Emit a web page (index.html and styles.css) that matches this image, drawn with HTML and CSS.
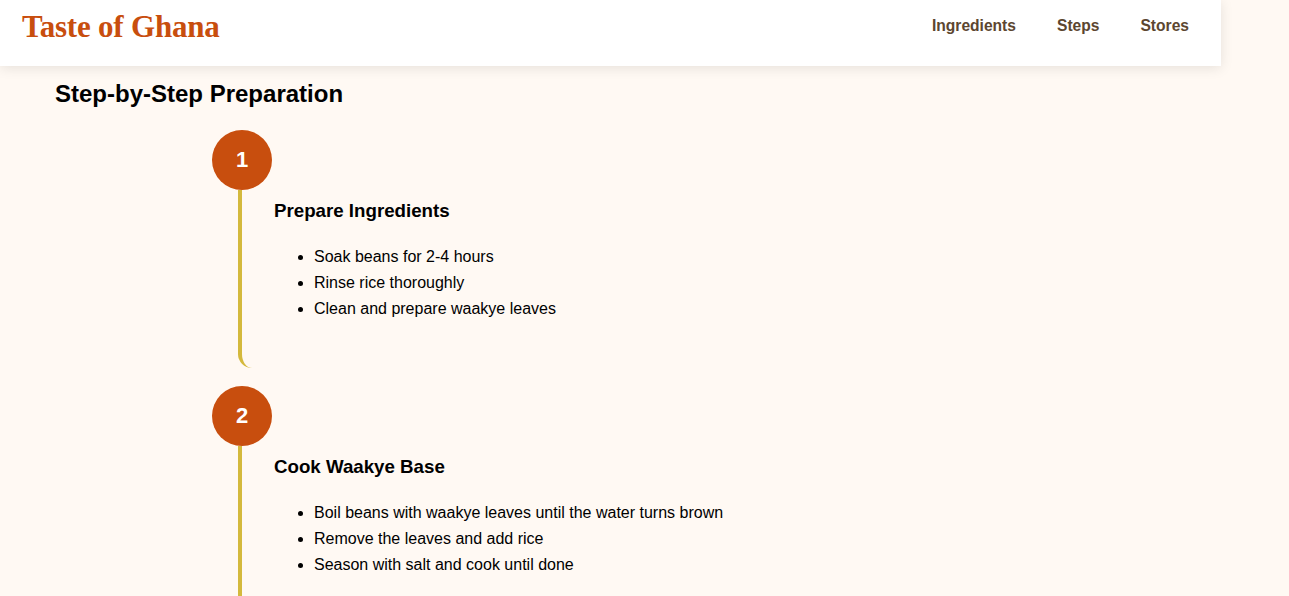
FILE: index.html
```html
<!DOCTYPE html>
<html lang="en">
<head>
<meta charset="utf-8">
<title>Taste of Ghana</title>
<link rel="stylesheet" href="styles.css">
</head>
<body>
<header class="site-header">
  <div class="logo">Taste of Ghana</div>
  <nav class="nav">
    <a href="#ingredients">Ingredients</a>
    <a href="#steps">Steps</a>
    <a href="#stores">Stores</a>
  </nav>
</header>
<main class="content">
  <h2 class="section-title">Step-by-Step Preparation</h2>
  <div class="timeline">
    <div class="step">
      <div class="step-num">1</div>
      <div class="step-body">
        <h3 class="step-title">Prepare Ingredients</h3>
        <ul class="step-list">
          <li>Soak beans for 2-4 hours</li>
          <li>Rinse rice thoroughly</li>
          <li>Clean and prepare waakye leaves</li>
        </ul>
      </div>
    </div>
    <div class="step">
      <div class="step-num">2</div>
      <div class="step-body">
        <h3 class="step-title">Cook Waakye Base</h3>
        <ul class="step-list">
          <li>Boil beans with waakye leaves until the water turns brown</li>
          <li>Remove the leaves and add rice</li>
          <li>Season with salt and cook until done</li>
        </ul>
      </div>
    </div>
  </div>
</main>
</body>
</html>
```
FILE: styles.css
```css
* { box-sizing: border-box; }
html, body { margin: 0; padding: 0; }
body {
  background: #fff9f3;
  font-family: "Liberation Sans", Arial, sans-serif;
  color: #000;
  overflow: hidden;
  height: 596px;
}
.site-header {
  width: 1221px;
  height: 66px;
  background: #fff;
  box-shadow: 0 2px 12px rgba(0,0,0,0.1);
  display: flex;
  align-items: center;
  justify-content: space-between;
  padding: 0 32px 0 22px;
  position: relative;
  z-index: 2;
}
.logo {
  font-family: "Liberation Serif", "DejaVu Serif", serif;
  font-weight: bold;
  font-size: 31px;
  color: #c84e0e;
  margin-top: -12px;
  letter-spacing: -0.2px;
}
.nav {
  display: flex;
  gap: 41px;
  margin-top: -14px;
}
.nav a {
  text-decoration: none;
  color: #5c4630;
  font-weight: bold;
  font-size: 15.6px;
}
.content {
  padding: 15px 0 0 55px;
}
.section-title {
  margin: 0;
  font-size: 24px;
  line-height: 25px;
  font-weight: bold;
}
.timeline {
  padding: 24px 0 0 157px;
  display: flex;
  flex-direction: column;
  gap: 18px;
}
.step {
  display: flex;
  flex-direction: column;
}
.step-num {
  width: 60px;
  height: 60px;
  border-radius: 50%;
  background: #c84e0e;
  color: #fff;
  font-weight: bold;
  font-size: 22px;
  display: flex;
  align-items: center;
  justify-content: center;
}
.step-body {
  margin-left: 26px;
  border-left: 4px solid #d4b93c;
  border-bottom-left-radius: 14px;
  padding: 10px 0 46px 32px;
}
.step-title {
  margin: 0 0 22px;
  font-size: 18.72px;
  line-height: 22px;
  font-weight: bold;
}
.step-list {
  margin: 0;
  padding-left: 40px;
  font-size: 16px;
  line-height: 26px;
}
```
